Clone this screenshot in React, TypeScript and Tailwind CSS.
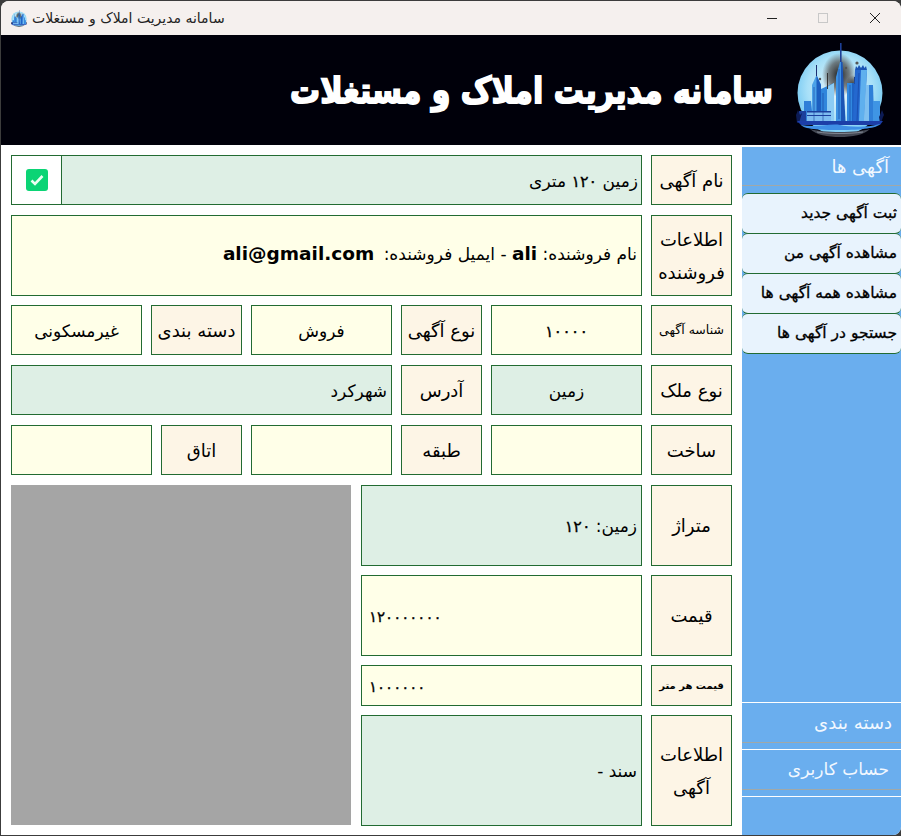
import type { ReactNode } from 'react';

const font = { fontFamily: '"DejaVu Sans", Tahoma, sans-serif' };

function Logo({ id, className }: { id: string; className?: string }) {
  return (
    <svg viewBox="0 0 90 95" className={className}>
      <defs>
        <radialGradient id={`${id}-sky`} cx="50%" cy="45%" r="55%">
          <stop offset="0%" stopColor="#eef7fa" />
          <stop offset="70%" stopColor="#a8e0f8" />
          <stop offset="100%" stopColor="#74c8f2" />
        </radialGradient>
        <radialGradient id={`${id}-smoke`} cx="50%" cy="50%" r="50%">
          <stop offset="0%" stopColor="#1c1c1c" />
          <stop offset="60%" stopColor="#4a4a4a" stopOpacity="0.7" />
          <stop offset="100%" stopColor="#4a4a4a" stopOpacity="0" />
        </radialGradient>
      </defs>
      <circle cx="45" cy="50" r="42.5" fill={`url(#${id}-sky)`} />
      <ellipse cx="44" cy="32" rx="17" ry="22" fill={`url(#${id}-smoke)`} />
      <ellipse cx="58" cy="44" rx="8" ry="12" fill={`url(#${id}-smoke)`} />
      <circle cx="62" cy="20" r="1.6" fill="#555" />
      <circle cx="25" cy="36" r="1.2" fill="#555" />
      <circle cx="51" cy="25" r="1.2" fill="#555" />
      {/* towers */}
      <path d="M45 0h1.6v32H45z" fill="#1d3f96" />
      <path d="M41 78V34l4-15h2l1 15v44z" fill="#3d91e2" />
      <path d="M46 19h1.500l3 59H46z" fill="#1b55b5" />
      <path d="M17 78V42l4.500-10 4.500 10v36z" fill="#4ba2e8" />
      <path d="M21.500 32l4.500 10v36h-4.500z" fill="#1c5fc0" />
      <path d="M21 22h1v11h-1z" fill="#1b2f70" />
      <path d="M26 78V46l13-6v38z" fill="#2f86dc" />
      <path d="M32 44l7-4v38h-7z" fill="#8cccf4" />
      <path d="M32 30h1v16h-1z" fill="#333" />
      <path d="M52 78V40h10v38z" fill="#3189e0" />
      <path d="M57 40h5v38h-5z" fill="#1e62c4" />
      <path d="M59 34h1v7h-1z" fill="#1b2f70" />
      <path d="M60 27h12l-3 51H58z" fill="#2468cf" />
      <path d="M66 27h6l-3 51h-5z" fill="#5fb0ee" />
      <path d="M60 27l1-4 1.500 2 1.500-3 2 3 2-3 1.500 3 1.500-2 1 4z" fill="#1b55b5" />
      <path d="M71 42h7l1 36H69z" fill="#7fc0f0" />
      <path d="M74 42h4l1 36h-5z" fill="#2f7fd8" />
      <path d="M78 58h7v20h-7z" fill="#3f95e4" />
      <path d="M9 58h7l2 20H9z" fill="#2f7fd8" />
      <path d="M4 68h7v10H4z" fill="#1b3f9c" />
      <path d="M12 68h24v10H12z" fill="#7cbcf0" />
      <path d="M12 68h24v1.500H12zM12 72h24v1H12z" fill="#1b3f9c" />
      <path d="M44 26v50M55 42v36M64 30l-2 48M19 44v34M28 50v28" stroke="#16409e" strokeWidth="0.6" />
      {/* palms */}
      <path d="M1 72l2-5 2 5 2-2-3 10H2z" fill="#0c1b55" />
      <path d="M85 72l2-5 2 5-1 2-2 6h-1l-1-6z" fill="#0c1b55" />
      {/* water */}
      <path d="M2 78h86l-3 4H6z" fill="#1c3ea8" />
      <path d="M6 82c16 3 30-2 39 0s26 3 40-1c-3 4-18 6-40 6S9 86 6 82z" fill="#3f8fe6" />
      <path d="M15 86c12 4 48 4 60 0-6 6-18 8-30 8s-24-2-30-8z" fill="#444854" />
      <path d="M22 89c14 2 32 2 46 0" stroke="#a8b0bc" strokeWidth="0.6" fill="none" />
    </svg>
  );
}

function Cell({
  w,
  tone,
  className = '',
  children,
}: {
  w: string;
  tone: 'label' | 'green' | 'yellow';
  className?: string;
  children?: ReactNode;
}) {
  const bg = tone === 'label' ? 'bg-[#fdf5e6]' : tone === 'green' ? 'bg-[#deefe5]' : 'bg-[#ffffe8]';
  return (
    <div className={`flex items-center border border-[#226b32] text-black ${bg} ${w} ${className}`}>
      {children}
    </div>
  );
}

function Label({ w = 'w-[81px]', text = 'text-[18px] leading-[33px]', children }: { w?: string; text?: string; children: ReactNode }) {
  return (
    <Cell w={w} tone="label" className={`shrink-0 justify-center text-center whitespace-nowrap ${text}`}>
      <div>{children}</div>
    </Cell>
  );
}

function Value({
  w,
  tone = 'yellow',
  center,
  children,
}: {
  w: string;
  tone?: 'green' | 'yellow';
  center?: boolean;
  children?: ReactNode;
}) {
  return (
    <Cell w={w} tone={tone} className={`shrink-0 text-[17px] px-1 pt-[3px] whitespace-nowrap ${center ? 'justify-center text-center' : ''}`}>
      {children}
    </Cell>
  );
}

function Num({ children }: { children: ReactNode }) {
  return <span className="text-[16px] [-webkit-text-stroke:0.3px_black]">{children}</span>;
}

function MenuItem({ children }: { children: ReactNode }) {
  return (
    <div className="h-[41px] -mt-px first:mt-0 flex items-center pr-1 rounded-[6px] border-y border-[#226b32] bg-[#e8f3fd] text-[15.5px] [-webkit-text-stroke:0.3px_black] text-black whitespace-nowrap">
      {children}
    </div>
  );
}

export default function App() {
  return (
    <div className="w-[901px] h-[836px] bg-[#3c3c3c] overflow-hidden pt-px" style={font} dir="rtl">
      <div className="h-[834px] flex flex-col rounded-t-[8px] rounded-br-[8px] overflow-hidden bg-white ml-px">
        {/* title bar */}
        <div className="h-[34px] shrink-0 flex items-center bg-[#f5f0ee]" dir="ltr">
          <Logo id="small" className="ml-[10px] w-[16px] h-[17px]" />
          <span className="ml-[5px] text-[14px] text-[#222]" dir="rtl">
            سامانه مدیریت املاک و مستغلات
          </span>
          <div className="ml-auto flex items-center">
            <svg width="120" height="14" viewBox="0 0 120 14" className="mr-[14px]">
              <path d="M0 7.5h10" stroke="#222" strokeWidth="1" />
              <rect x="51.5" y="2.5" width="9" height="9" fill="none" stroke="#c8c8c8" />
              <path d="M103 2l10 10M113 2l-10 10" stroke="#222" strokeWidth="1" fill="none" />
            </svg>
          </div>
        </div>

        {/* header */}
        <div className="h-[110px] shrink-0 flex items-center bg-[#00000a] pr-[16px]">
          <Logo id="big" className="w-[90px] h-[95px] shrink-0" />
          <h1 className="mr-[22px] text-[30px] font-bold text-white scale-y-[1.2] [-webkit-text-stroke:1.5px_white]">
            سامانه مدیریت املاک و مستغلات
          </h1>
        </div>

        <div className="flex-1 flex min-h-0 border-t border-white">
          {/* side menu */}
          <aside className="w-[159px] shrink-0 flex flex-col bg-[#6aaeee] mt-px">
            <div className="h-[39px] shrink-0 flex items-center pr-[12px] border-b border-[#a0a8a8] text-[18px] text-[#f2f8ff]">
              آگهی ها
            </div>
            <div className="mt-[7px] flex flex-col">
              <MenuItem>ثبت آگهی جدید</MenuItem>
              <MenuItem>مشاهده آگهی من</MenuItem>
              <MenuItem>مشاهده همه آگهی ها</MenuItem>
              <MenuItem>جستجو در آگهی ها</MenuItem>
            </div>
            <div className="flex-1" />
            <div className="h-[41px] shrink-0 flex items-center pr-[9px] border-t border-b border-t-white border-b-[#a0a8a8] text-[18px] text-[#f2f8ff]">
              دسته بندی
            </div>
            <div className="h-[41px] shrink-0 mt-[6px] flex items-center pr-[12px] border-t border-b border-t-white border-b-[#a0a8a8] text-[17px] text-[#f2f8ff]">
              حساب کاربری
            </div>
            <div className="h-[39px] shrink-0 mt-[6px] border-t border-white" />
          </aside>

          {/* form */}
          <main className="flex-1 flex flex-col pt-[9px] pr-[10px] pl-[10px]">
            <div className="h-[50px] mb-[10px] flex gap-[9px]">
              <Label>نام آگهی</Label>
              <div className="flex-1 flex border border-[#226b32]">
                <div className="flex-1 flex items-center px-[3px] pt-[3px] bg-[#deefe5] text-[17px]">
                  <span>زمین <Num>۱۲۰</Num> متری</span>
                </div>
                <div className="w-[50px] flex items-center justify-center border-r border-[#226b32] bg-white">
                  <div className="w-[22px] h-[22px] rounded-[3px] bg-[#0bd475] flex items-center justify-center">
                    <svg width="14" height="12" viewBox="0 0 14 12">
                      <path d="M1.500 6.500l3.500 3.500 7.500-8" fill="none" stroke="#eafff2" strokeWidth="2.600" />
                    </svg>
                  </div>
                </div>
              </div>
            </div>

            <div className="h-[81px] mb-[9px] flex gap-[9px]">
              <Label>
                اطلاعات
                <br />
                فروشنده
              </Label>
              <Cell w="flex-1" tone="yellow" className="items-start pt-[24px] px-1 text-[17px]">
                <div>
                  نام فروشنده: <b className="text-[18.5px]">ali</b> - ایمیل فروشنده: <b className="text-[18.5px] mr-[4px]">ali@gmail.com</b>
                </div>
              </Cell>
            </div>

            <div className="h-[50px] mb-[10px] flex gap-[9px]">
              <Label text="text-[12.5px]">شناسه آگهی</Label>
              <Value w="w-[151px]" center><Num>۱۰۰۰۰</Num></Value>
              <Label>نوع آگهی</Label>
              <Value w="w-[141px]" center>فروش</Value>
              <Label w="w-[91px]">دسته بندی</Label>
              <Value w="flex-1" center>غیرمسکونی</Value>
            </div>

            <div className="h-[50px] mb-[10px] flex gap-[9px]">
              <Label>نوع ملک</Label>
              <Value w="w-[151px]" tone="green" center>زمین</Value>
              <Label>آدرس</Label>
              <Value w="flex-1" tone="green">شهرکرد</Value>
            </div>

            <div className="h-[50px] mb-[10px] flex gap-[9px]">
              <Label>ساخت</Label>
              <Value w="w-[151px]" />
              <Label>طبقه</Label>
              <Value w="w-[141px]" />
              <Label>اتاق</Label>
              <Value w="flex-1" />
            </div>

            <div className="flex gap-[10px]">
              <div className="w-[371px] shrink-0 flex flex-col gap-[9px]">
                <div className="h-[81px] flex gap-[9px]">
                  <Label>متراژ</Label>
                  <Value w="flex-1" tone="green">
                    <span>زمین: <Num>۱۲۰</Num></span>
                  </Value>
                </div>
                <div className="h-[81px] flex gap-[9px]">
                  <Label>قیمت</Label>
                  <Value w="flex-1">
                    <span className="mr-auto pl-[3px] [&>span]:text-[15px]"><Num>۱۲۰۰۰۰۰۰۰</Num></span>
                  </Value>
                </div>
                <div className="h-[41px] flex gap-[9px]">
                  <Label text="text-[10px] font-bold">قیمت هر متر</Label>
                  <Value w="flex-1">
                    <span className="mr-auto pl-[3px] [&>span]:text-[15px]"><Num>۱۰۰۰۰۰۰</Num></span>
                  </Value>
                </div>
                <div className="h-[111px] flex gap-[9px]">
                  <Label>
                    اطلاعات
                    <br />
                    آگهی
                  </Label>
                  <Value w="flex-1" tone="green">سند -</Value>
                </div>
              </div>
              <div className="w-[340px] h-[340px] shrink-0 bg-[#a5a5a5]" />
            </div>
          </main>
        </div>
      </div>
    </div>
  );
}
